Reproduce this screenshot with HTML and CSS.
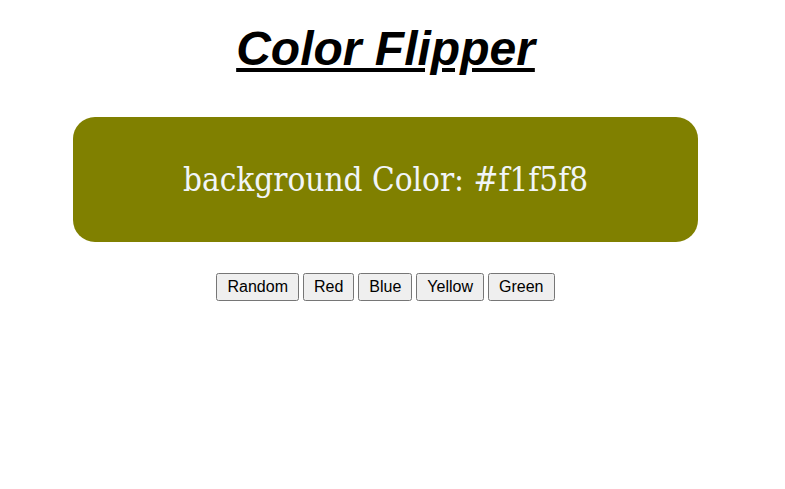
FILE: index.html
```html
<!DOCTYPE html>
<html>
<head>
<meta charset="utf-8">
<link rel="stylesheet" href="styles.css">
<title>Color Flipper</title>
</head>
<body>
<div class="page">
  <h1 class="title">Color Flipper</h1>
  <div class="panel">
    <p class="panel-text">background Color: #f1f5f8</p>
  </div>
  <div class="controls">
    <button class="btn">Random</button>
    <button class="btn">Red</button>
    <button class="btn">Blue</button>
    <button class="btn">Yellow</button>
    <button class="btn">Green</button>
  </div>
</div>
</body>
</html>
```
FILE: styles.css
```css
html, body {
  margin: 0;
  padding: 0;
  background: #ffffff;
}
.page {
  width: 771px;
  padding-top: 1px;
  text-align: center;
  font-family: "Liberation Serif", serif;
}
.title {
  font-family: "Liberation Sans", Arial, sans-serif;
  font-weight: bold;
  font-style: italic;
  text-decoration: underline;
  font-size: 48px;
  margin: 20px 0 0;
  color: #000;
}
.panel {
  width: 625px;
  height: 125px;
  margin: 41px auto 0;
  background: #808000;
  border-radius: 22px;
  display: flex;
  align-items: center;
  justify-content: center;
}
.panel-text {
  margin: 0;
  color: #f1f5f8;
  font-family: "DejaVu Serif", serif;
  font-stretch: condensed;
  font-size: 33px;
}
.controls {
  margin-top: 31px;
}
.btn {
  font-family: "Liberation Sans", Arial, sans-serif;
  font-size: 16px;
  padding: 3px 9px;
}
```
